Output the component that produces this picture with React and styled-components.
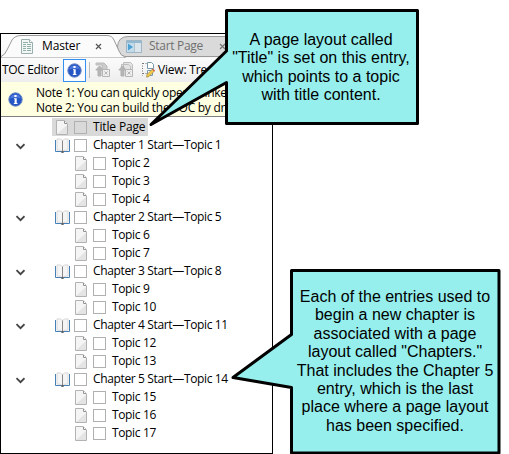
import React from "react";
import styled, { createGlobalStyle } from "styled-components";

const Global = createGlobalStyle`
  *{box-sizing:border-box}
  body{margin:0;background:#fff;overflow:hidden;color:#000;font:12px/18px "Open Sans","Noto Sans",sans-serif}
  svg{display:block;flex:none}
`;
const Stage = styled.main`position:relative;width:509px;height:454px;overflow:hidden;padding-top:33px;`;
const Panel = styled.section`width:273px;height:421px;border:1px solid #000;background:#fff;overflow:hidden;`;
const Label = styled.span`
  white-space:pre;letter-spacing:${p => p.$ls ?? -0.36}px;color:${p => p.$color ?? "#000"};
`;
const TabStrip = styled.div`position:relative;height:24px;background:linear-gradient(#fdfdfd,#f5f5f5);`;
const TabShape = styled.svg`position:absolute;left:0;top:0;`;
const TabRow = styled.div`position:relative;display:flex;height:24px;`;
const Tab = styled.div`display:flex;align-items:center;width:${p => p.$w}px;padding-left:${p => p.$pl}px;flex:none;`;
const TabLabel = styled(Label)`margin-left:${p => p.$ml}px;width:${p => p.$w}px;`;
const Toolbar = styled.div`display:flex;align-items:center;height:24px;background:linear-gradient(#fbfbfb,#eeeeee);`;
const ToolTitle = styled(Label)`width:62px;padding-left:1px;flex:none;`;
const InfoButton = styled.div`width:23px;height:23px;border:1px solid #3390f0;background:#fafcff;display:flex;align-items:center;justify-content:center;flex:none;`;
const Divider = styled.i`width:1px;height:16px;background:#bbb;margin:0 5px 0 3px;flex:none;`;
const Tools = styled.div`display:flex;gap:7px;margin-right:7px;`;
const ViewLabel = styled(Label)`margin-left:2px;`;
const NoteBar = styled.div`display:flex;align-items:center;height:35px;background:#ffffe1;border-bottom:1px solid #808080;padding-left:7px;`;
const NoteText = styled(Label)`margin-left:13px;padding-top:1px;line-height:15px;`;
const Tree = styled.div`padding-top:1px;`;
const Row = styled.div`display:flex;align-items:center;height:18px;`;
const Twisty = styled.div`width:51px;height:18px;padding:7px 0 0 14px;flex:none;`;
const Item = styled.div`
  display:flex;align-items:center;height:18px;padding:0 3px 0 ${p => p.$indent}px;
  background:${p => p.$selected ? "#d9d9d9" : "transparent"};
`;
const IconCell = styled.div`width:${p => p.$w}px;flex:none;`;
const Check = styled.i`width:13px;height:13px;border:1px solid #b0b0b0;margin:1px 6px 0 0;flex:none;`;
const Callout = styled.div`position:absolute;left:${p => p.$x}px;top:${p => p.$y}px;width:${p => p.$w}px;height:${p => p.$h}px;`;
const CalloutShape = styled.svg`position:absolute;inset:0;`;
const CalloutText = styled.div`
  position:relative;margin-left:${p => p.$ml}px;margin-right:${p => p.$mr ?? 0}px;padding-top:${p => p.$pt}px;
  text-align:center;white-space:pre;font:16px/18.4px "Liberation Sans",Arial,sans-serif;
`;

const Info = () => (
  <svg width="15" height="15" viewBox="0 0 15 15">
    <circle cx="7.5" cy="7.5" r="6.7" fill="#2456c5" stroke="#6d88c4" />
    <path d="M2 6.5a5.7 5.3 0 0 1 11 0q-5-2-11 0z" fill="#5f8ae5" opacity=".7" />
    <path d="M6.4 3h2.2v2H6.4zM6 6.2h2.7V11H9.5v1H5.8v-1h.8V7.1H6z" fill="#fff" />
  </svg>
);
const Page = () => (
  <svg width="12" height="15" viewBox="0 0 12 15">
    <path d="M.5.5h7.7l3.3 3.3v10.7H.5z" fill="#f5f5f5" stroke="#b2b2b2" />
    <path d="M1 14 11 5v9z" fill="#e4e4e4" />
    <path d="M8.500 1v2.500H11" fill="#fff" stroke="#929292" />
  </svg>
);
const Book = () => (
  <svg width="15" height="15" viewBox="0 0 15 15">
    <path d="M.5 2v11.5h6l1 1 1-1h6V2" fill="#fff" stroke="#4580b7" />
    <path d="M2 .9q3.5-.6 5.5 1.4Q9.5.3 13 .9v11.2q-3.5-.4-5.5 1.4Q5.500 11.700 2 12.100z" fill="#f5f5f5" stroke="#d0d0d0" strokeWidth=".8" />
    <path d="M7.500 2.500v11.500" stroke="#888" />
    <path d="M6 14h3" stroke="#333" />
  </svg>
);
const Chevron = () => (
  <svg width="10" height="7" viewBox="0 0 10 7"><path d="M1.500 1.200 5.500 5.200 9.500 1.200" fill="none" stroke="#444" strokeWidth="1.800" /></svg>
);
const Close = ({ color }) => (
  <svg width="7" height="7" viewBox="0 0 7 7"><path d="m1 1 5 5M6 1 1 6" stroke={color} strokeWidth="1.200" /></svg>
);
const TocDoc = () => (
  <svg width="12" height="15" viewBox="0 0 12 15">
    <path d="M.5.5h8l3 3v11H.5z" fill="#f2f6f5" stroke="#9aaeae" />
    <path d="M8.500.5v3h3" fill="#fff" stroke="#9aaeae" />
    <path d="M2 3.500h5M2 5.500h3M6 5.500h4M2 7.500h3M6 7.500h4M2 9.500h3M6 9.500h4M2 11.500h3M6 11.500h4" stroke="#8fb0a8" />
  </svg>
);
const StartIcon = () => (
  <svg width="16" height="13" viewBox="0 0 16 13">
    <path d="M.5.5h15v12H.5z" fill="#dbe6ec" stroke="#9db5c4" />
    <path d="M1 1h14v2H1z" fill="#93b9d0" /><path d="M1 3h7v9H1z" fill="#c3dceb" />
    <path d="m2 3.500 5 3.500-5 3.500z" fill="#4c9fd0" /><path d="M8.500 3v9" stroke="#b1c2cc" />
  </svg>
);
const MoveIcon = ({ multi }) => (
  <svg width="16" height="16" viewBox="0 0 16 16">
    {multi && <path d="M5.500 6V.5h7l2 2V9M3.500 6V2.500h7l2 2V9" fill="#e4e4e4" stroke="#bdbdbd" />}
    {!multi && <path d="M1 3V1h8l3 3v5H7V3z" fill="#cbcbcb" stroke="#bcbcbc" />}
    <path d="M3 14V8H.8L4.500 4l3.700 4H6v6z" fill="#b5b5b5" stroke="#b0b0b0" />
    <path d="M7.500 7.500h7v7h-7z" fill="#eee" stroke="#b5b5b5" />
    <path d="m9.500 9.500 3 3m0-3-3 3" stroke="#b5b5b5" />
  </svg>
);
const ViewIcon = () => (
  <svg width="15" height="16" viewBox="0 0 15 16">
    <path d="M1.500 1v13M2 1.500h4M2 11.500h4" stroke="#777" strokeDasharray="1 1.500" />
    <path d="M6.500.5h4l2 2v4h-6zM6.500 8.500h5v5h-5z" fill="#fff" stroke="#7898ac" />
    <path d="m6 12.500 5.500-5.500 2 2L8 14.500l-2.500.7z" fill="#f0cc49" stroke="#987b38" strokeWidth=".6" />
    <path d="m11.500 7 2 2" stroke="#d46255" strokeWidth="1.500" />
  </svg>
);

const rows = [
  ["Title Page", "title"], ["Chapter 1 Start—Topic 1", "chapter"], ["Topic 2"], ["Topic 3"], ["Topic 4"],
  ["Chapter 2 Start—Topic 5", "chapter"], ["Topic 6"], ["Topic 7"],
  ["Chapter 3 Start—Topic 8", "chapter"], ["Topic 9"], ["Topic 10"],
  ["Chapter 4 Start—Topic 11", "chapter"], ["Topic 12"], ["Topic 13"],
  ["Chapter 5 Start—Topic 14", "chapter"], ["Topic 15"], ["Topic 16"], ["Topic 17"],
];
const TreeRow = ({ text, kind }) => (
  <Row>
    <Twisty>{kind === "chapter" && <Chevron />}</Twisty>
    <Item $selected={kind === "title"} $indent={kind === "chapter" ? 3 : kind === "title" ? 4 : 23}>
      <IconCell $w={kind === "chapter" ? 19 : 18}>{kind === "chapter" ? <Book /> : <Page />}</IconCell>
      <Check /><Label $ls={kind === "title" ? -0.15 : -0.36}>{text}</Label>
    </Item>
  </Row>
);

export default function App() {
  return (
    <Stage>
      <Global />
      <Panel>
        <TabStrip>
          <TabShape width="271" height="24">
            <path d="M113 22.500Q118 20 116.500 13 117 2.500 127 2.500H271v20z" fill="#dadada" stroke="#999" />
            <path d="M0 22.500Q4 21 6 16L11 6Q14 1.500 20 1.500H106Q111 1.500 113 6L118 17Q120 22.500 124 22.500V24H0z" fill="#fbfbfb" stroke="#999" />
          </TabShape>
          <TabRow>
            <Tab $w={123} $pl={20}><TocDoc /><TabLabel $ml={9} $w={53} $ls={-0.15}>Master</TabLabel><Close color="#555" /></Tab>
            <Tab $w={148} $pl={2}><StartIcon /><TabLabel $ml={7} $w={70} $ls={-0.3} $color="#707070">Start Page</TabLabel><Close color="#777" /></Tab>
          </TabRow>
        </TabStrip>
        <Toolbar>
          <ToolTitle>TOC Editor</ToolTitle>
          <InfoButton><Info /></InfoButton><Divider />
          <Tools><MoveIcon /><MoveIcon multi /></Tools>
          <ViewIcon /><ViewLabel $ls={-0.2}>View: Tree</ViewLabel>
        </Toolbar>
        <NoteBar>
          <Info />
          <NoteText $ls={-0.28}>{"Note 1: You can quickly open a linked\nNote 2: You can build the TOC by drag"}</NoteText>
        </NoteBar>
        <Tree>{rows.map(([text, kind]) => <TreeRow key={text} text={text} kind={kind} />)}</Tree>
      </Panel>
      <Callout $x={145} $y={5} $w={277} $h={123}>
        <CalloutShape width="277" height="123">
          <path d="M81.500 5.500H272.500V118.500H81.500V77.500L6 119.500 81.500 46z" fill="#96efed" stroke="#000" strokeWidth="3" strokeLinejoin="round" />
        </CalloutShape>
        <CalloutText $ml={81} $mr={6} $pt={26}>{"A page layout called\n\"Title\" is set on this entry,\nwhich points to a topic\nwith title content."}</CalloutText>
      </Callout>
      <Callout $x={227} $y={265} $w={282} $h={189}>
        <CalloutShape width="282" height="189">
          <path d="M64.500 5.500H272V188H64.500V122.500L6 112.500 64.500 69.500z" fill="#96efed" stroke="#000" strokeWidth="3" strokeLinejoin="round" />
        </CalloutShape>
        <CalloutText $ml={54} $pt={23}>{"Each of the entries used to\nbegin a new chapter is\nassociated with a page\nlayout called \"Chapters.\"\nThat includes the Chapter 5\nentry, which is the last\nplace where a page layout\nhas been specified."}</CalloutText>
      </Callout>
    </Stage>
  );
}
